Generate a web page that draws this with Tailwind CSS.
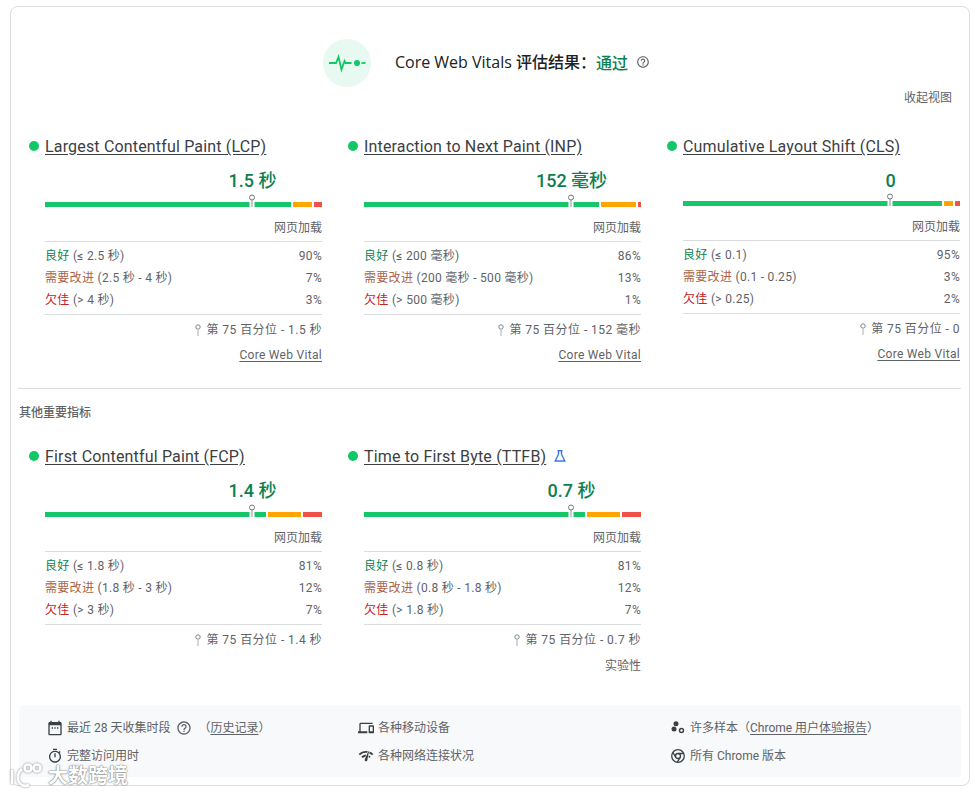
<!doctype html>
<html lang="zh">
<head>
<meta charset="utf-8">
<script src="https://cdn.jsdelivr.net/npm/@tailwindcss/browser@4"></script>
</head>
<body class="bg-white font-['Roboto','Noto_Sans_CJK_SC',sans-serif] text-[#5f6368]">
<div class="relative h-[795px] w-[977px] overflow-hidden pl-2.5 pt-1.5">
  <main class="h-[780px] w-[960px] rounded-lg border border-[#dadce0] px-2 pt-8">
    <header class="flex items-center justify-center gap-6 pr-[7px]">
      <div class="flex size-12 items-center justify-center rounded-full bg-[#e8f9f1]">
        <svg class="h-6 w-[38px]" viewBox="0 0 38 24" fill="none" stroke="#12c765" stroke-width="1.8"><path d="M1 12h7l2.5-6 3 12.5 3-8.5 1 2h6"/><circle cx="29" cy="12" r="3" fill="#12c765" stroke="none"/><path d="M33.5 12h4"/></svg>
      </div>
      <div class="flex items-center pb-0.5 text-base font-medium text-[#202124]">
        <span class="font-['Open_Sans','Noto_Sans_CJK_SC',sans-serif]">Core Web Vitals 评估结果：</span><span class="font-['Noto_Sans_CJK_SC',sans-serif] text-[#0d7f4f]">通过</span>
        <svg class="ml-2 size-3.5" viewBox="0 0 24 24" fill="#5f6368"><path d="M11 18h2v-2h-2v2zm1-16C6.48 2 2 6.48 2 12s4.48 10 10 10 10-4.48 10-10S17.52 2 12 2zm0 18c-4.41 0-8-3.59-8-8s3.59-8 8-8 8 3.59 8 8-3.59 8-8 8zm0-14c-2.21 0-4 1.79-4 4h2c0-1.1.9-2 2-2s2 .9 2 2c0 2-3 1.75-3 5h2c0-2.25 3-2.5 3-5 0-2.21-1.79-4-4-4z"/></svg>
      </div>
    </header>
    <div class="mt-0.5 h-4 pr-[9px] text-right text-xs leading-[18px]">收起视图</div>

    <section class="mt-[29px] grid w-[941px] grid-cols-3 gap-4">
      <!-- LCP -->
      <article class="pl-[26px]">
        <div class="relative h-6 text-base leading-[26px] tracking-[0.17px] text-[#3c4043]"><span class="absolute -left-4 top-[7px] size-2.5 rounded-full bg-[#12c765]"></span><a class="underline underline-offset-2">Largest Contentful Paint (LCP)</a></div>
        <div class="relative mt-2.5 h-6"><span class="absolute left-[207.5px] -translate-x-1/2 whitespace-nowrap text-lg font-medium leading-[26px] text-[#0d7f4f]">1.5 秒</span></div>
        <div class="relative mt-2.5 flex h-[5px] gap-0.5">
          <span class="grow-[90] basis-0 bg-[#15c768]"></span><span class="grow-[7] basis-0 bg-[#ffa400]"></span><span class="grow-[3] basis-0 bg-[#f0524a]"></span>
          <svg class="absolute -top-2 left-[207px] h-[13px] w-[9px] -translate-x-1/2" viewBox="0 0 9 13"><rect x="2" y="7" width="5" height="6" fill="#fff"/><rect x="3.5" y="6" width="2" height="7" fill="#c6cacd"/><circle cx="4.5" cy="3.5" r="2.5" fill="#fff" stroke="#757575"/></svg>
        </div>
        <div class="mt-3 h-4 text-right text-xs leading-[18px]">网页加载</div>
        <div class="mt-1.5 border-y border-[#dadce0] py-[3px] text-xs leading-[22px] tracking-[0.3px]">
          <div class="flex justify-between"><span><span class="text-[#0d7f4f]">良好</span> (≤ 2.5 秒)</span><span>90%</span></div>
          <div class="flex justify-between"><span><span class="text-[#a9654a]">需要改进</span> (2.5 秒 - 4 秒)</span><span>7%</span></div>
          <div class="flex justify-between"><span><span class="text-[#c5221f]">欠佳</span> (&gt; 4 秒)</span><span>3%</span></div>
        </div>
        <div class="mt-[7px] flex h-4 items-center justify-end gap-1 text-xs tracking-[0.45px]"><svg class="h-3 w-2" viewBox="0 0 8 12"><circle cx="4" cy="3" r="2.2" fill="none" stroke="#80868b"/><path d="M4 5.5V12" stroke="#c6cacd" stroke-width="1.5"/></svg><span>第 75 百分位 - 1.5 秒</span></div>
        <div class="mt-[9px] h-4 text-right text-xs leading-4 tracking-[0.3px]"><a class="underline underline-offset-2">Core Web Vital</a></div>
      </article>
      <!-- INP -->
      <article class="pl-[26px]">
        <div class="relative h-6 text-base leading-[26px] tracking-[0.17px] text-[#3c4043]"><span class="absolute -left-4 top-[7px] size-2.5 rounded-full bg-[#12c765]"></span><a class="underline underline-offset-2">Interaction to Next Paint (INP)</a></div>
        <div class="relative mt-2.5 h-6"><span class="absolute left-[207.5px] -translate-x-1/2 whitespace-nowrap text-lg font-medium leading-[26px] text-[#0d7f4f]">152 毫秒</span></div>
        <div class="relative mt-2.5 flex h-[5px] gap-0.5">
          <span class="grow-[86] basis-0 bg-[#15c768]"></span><span class="grow-[13] basis-0 bg-[#ffa400]"></span><span class="grow-[1] basis-0 bg-[#f0524a]"></span>
          <svg class="absolute -top-2 left-[207px] h-[13px] w-[9px] -translate-x-1/2" viewBox="0 0 9 13"><rect x="2" y="7" width="5" height="6" fill="#fff"/><rect x="3.5" y="6" width="2" height="7" fill="#c6cacd"/><circle cx="4.5" cy="3.5" r="2.5" fill="#fff" stroke="#757575"/></svg>
        </div>
        <div class="mt-3 h-4 text-right text-xs leading-[18px]">网页加载</div>
        <div class="mt-1.5 border-y border-[#dadce0] py-[3px] text-xs leading-[22px] tracking-[0.3px]">
          <div class="flex justify-between"><span><span class="text-[#0d7f4f]">良好</span> (≤ 200 毫秒)</span><span>86%</span></div>
          <div class="flex justify-between"><span><span class="text-[#a9654a]">需要改进</span> (200 毫秒 - 500 毫秒)</span><span>13%</span></div>
          <div class="flex justify-between"><span><span class="text-[#c5221f]">欠佳</span> (&gt; 500 毫秒)</span><span>1%</span></div>
        </div>
        <div class="mt-[7px] flex h-4 items-center justify-end gap-1 text-xs tracking-[0.45px]"><svg class="h-3 w-2" viewBox="0 0 8 12"><circle cx="4" cy="3" r="2.2" fill="none" stroke="#80868b"/><path d="M4 5.5V12" stroke="#c6cacd" stroke-width="1.5"/></svg><span>第 75 百分位 - 152 毫秒</span></div>
        <div class="mt-[9px] h-4 text-right text-xs leading-4 tracking-[0.3px]"><a class="underline underline-offset-2">Core Web Vital</a></div>
      </article>
      <!-- CLS -->
      <article class="pl-[26px]">
        <div class="relative h-6 text-base leading-[26px] tracking-[0.17px] text-[#3c4043]"><span class="absolute -left-4 top-[7px] size-2.5 rounded-full bg-[#12c765]"></span><a class="underline underline-offset-2">Cumulative Layout Shift (CLS)</a></div>
        <div class="relative mt-2.5 h-6"><span class="absolute left-[207.5px] -translate-x-1/2 whitespace-nowrap text-lg font-medium leading-[26px] text-[#0d7f4f]">0</span></div>
        <div class="relative mt-[9px] flex h-[5px] gap-0.5">
          <span class="grow-[95] basis-0 bg-[#15c768]"></span><span class="grow-[3] basis-0 bg-[#ffa400]"></span><span class="grow-[2] basis-0 bg-[#f0524a]"></span>
          <svg class="absolute -top-2 left-[207px] h-[13px] w-[9px] -translate-x-1/2" viewBox="0 0 9 13"><rect x="2" y="7" width="5" height="6" fill="#fff"/><rect x="3.5" y="6" width="2" height="7" fill="#c6cacd"/><circle cx="4.5" cy="3.5" r="2.5" fill="#fff" stroke="#757575"/></svg>
        </div>
        <div class="mt-3 h-4 text-right text-xs leading-[18px]">网页加载</div>
        <div class="mt-1.5 border-y border-[#dadce0] py-[3px] text-xs leading-[22px] tracking-[0.3px]">
          <div class="flex justify-between"><span><span class="text-[#0d7f4f]">良好</span> (≤ 0.1)</span><span>95%</span></div>
          <div class="flex justify-between"><span><span class="text-[#a9654a]">需要改进</span> (0.1 - 0.25)</span><span>3%</span></div>
          <div class="flex justify-between"><span><span class="text-[#c5221f]">欠佳</span> (&gt; 0.25)</span><span>2%</span></div>
        </div>
        <div class="mt-[7px] flex h-4 items-center justify-end gap-1 text-xs tracking-[0.45px]"><svg class="h-3 w-2" viewBox="0 0 8 12"><circle cx="4" cy="3" r="2.2" fill="none" stroke="#80868b"/><path d="M4 5.5V12" stroke="#c6cacd" stroke-width="1.5"/></svg><span>第 75 百分位 - 0</span></div>
        <div class="mt-[9px] h-4 text-right text-xs leading-4 tracking-[0.3px]"><a class="underline underline-offset-2">Core Web Vital</a></div>
      </article>
    </section>

    <hr class="-ml-px mt-[25px] border-[#dadce0]">
    <h2 class="mt-4 h-4 text-xs font-medium leading-4">其他重要指标</h2>

    <section class="mt-[23px] grid w-[941px] grid-cols-3 gap-4">
      <!-- FCP -->
      <article class="pl-[26px]">
        <div class="relative h-6 text-base leading-[26px] tracking-[0.17px] text-[#3c4043]"><span class="absolute -left-4 top-[7px] size-2.5 rounded-full bg-[#12c765]"></span><a class="underline underline-offset-2">First Contentful Paint (FCP)</a></div>
        <div class="relative mt-2.5 h-6"><span class="absolute left-[207.5px] -translate-x-1/2 whitespace-nowrap text-lg font-medium leading-[26px] text-[#0d7f4f]">1.4 秒</span></div>
        <div class="relative mt-2.5 flex h-[5px] gap-0.5">
          <span class="grow-[81] basis-0 bg-[#15c768]"></span><span class="grow-[12] basis-0 bg-[#ffa400]"></span><span class="grow-[7] basis-0 bg-[#f0524a]"></span>
          <svg class="absolute -top-2 left-[207px] h-[13px] w-[9px] -translate-x-1/2" viewBox="0 0 9 13"><rect x="2" y="7" width="5" height="6" fill="#fff"/><rect x="3.5" y="6" width="2" height="7" fill="#c6cacd"/><circle cx="4.5" cy="3.5" r="2.5" fill="#fff" stroke="#757575"/></svg>
        </div>
        <div class="mt-3 h-4 text-right text-xs leading-[18px]">网页加载</div>
        <div class="mt-1.5 border-y border-[#dadce0] py-[3px] text-xs leading-[22px] tracking-[0.3px]">
          <div class="flex justify-between"><span><span class="text-[#0d7f4f]">良好</span> (≤ 1.8 秒)</span><span>81%</span></div>
          <div class="flex justify-between"><span><span class="text-[#a9654a]">需要改进</span> (1.8 秒 - 3 秒)</span><span>12%</span></div>
          <div class="flex justify-between"><span><span class="text-[#c5221f]">欠佳</span> (&gt; 3 秒)</span><span>7%</span></div>
        </div>
        <div class="mt-[7px] flex h-4 items-center justify-end gap-1 text-xs tracking-[0.45px]"><svg class="h-3 w-2" viewBox="0 0 8 12"><circle cx="4" cy="3" r="2.2" fill="none" stroke="#80868b"/><path d="M4 5.5V12" stroke="#c6cacd" stroke-width="1.5"/></svg><span>第 75 百分位 - 1.4 秒</span></div>
        <div class="mt-[9px] h-4"></div>
      </article>
      <!-- TTFB -->
      <article class="pl-[26px]">
        <div class="relative flex h-6 items-start gap-2 text-base leading-[26px] tracking-[0.17px] text-[#3c4043]"><span class="absolute -left-4 top-[7px] size-2.5 rounded-full bg-[#12c765]"></span><a class="underline underline-offset-2">Time to First Byte (TTFB)</a>
          <svg class="mt-1.5 size-3" viewBox="0 0 12 12" fill="none" stroke="#3b78e7" stroke-width="1.4"><path d="M3.5 .7h5M4.5 .7v3.5L1.2 11h9.6L7.5 4.200V.7"/></svg></div>
        <div class="relative mt-2.5 h-6"><span class="absolute left-[207.5px] -translate-x-1/2 whitespace-nowrap text-lg font-medium leading-[26px] text-[#0d7f4f]">0.7 秒</span></div>
        <div class="relative mt-2.5 flex h-[5px] gap-0.5">
          <span class="grow-[81] basis-0 bg-[#15c768]"></span><span class="grow-[12] basis-0 bg-[#ffa400]"></span><span class="grow-[7] basis-0 bg-[#f0524a]"></span>
          <svg class="absolute -top-2 left-[207px] h-[13px] w-[9px] -translate-x-1/2" viewBox="0 0 9 13"><rect x="2" y="7" width="5" height="6" fill="#fff"/><rect x="3.5" y="6" width="2" height="7" fill="#c6cacd"/><circle cx="4.5" cy="3.5" r="2.5" fill="#fff" stroke="#757575"/></svg>
        </div>
        <div class="mt-3 h-4 text-right text-xs leading-[18px]">网页加载</div>
        <div class="mt-1.5 border-y border-[#dadce0] py-[3px] text-xs leading-[22px] tracking-[0.3px]">
          <div class="flex justify-between"><span><span class="text-[#0d7f4f]">良好</span> (≤ 0.8 秒)</span><span>81%</span></div>
          <div class="flex justify-between"><span><span class="text-[#a9654a]">需要改进</span> (0.8 秒 - 1.8 秒)</span><span>12%</span></div>
          <div class="flex justify-between"><span><span class="text-[#c5221f]">欠佳</span> (&gt; 1.8 秒)</span><span>7%</span></div>
        </div>
        <div class="mt-[7px] flex h-4 items-center justify-end gap-1 text-xs tracking-[0.45px]"><svg class="h-3 w-2" viewBox="0 0 8 12"><circle cx="4" cy="3" r="2.2" fill="none" stroke="#80868b"/><path d="M4 5.5V12" stroke="#c6cacd" stroke-width="1.5"/></svg><span>第 75 百分位 - 0.7 秒</span></div>
        <div class="mt-[9px] h-4 text-right text-xs leading-[18px]">实验性</div>
      </article>
    </section>

    <footer class="mt-8 grid h-[72px] grid-cols-[311px_312px_1fr] grid-rows-2 rounded-sm bg-[#f8f9fa] pb-[7px] pl-7 pt-[9px] text-xs">
      <div class="flex items-center gap-1">
        <svg class="size-4" viewBox="0 0 24 24" fill="#3c4043"><path d="M20 3h-1V1h-2v2H7V1H5v2H4c-1.1 0-2 .9-2 2v16c0 1.1.9 2 2 2h16c1.100 0 2-.9 2-2V5c0-1.100-.9-2-2-2zm0 18H4V8h16v13z"/><path d="M7 11h2v2H7zm4 0h2v2h-2zm4 0h2v2h-2z"/></svg>
        <span>最近 28 天收集时段</span>
        <svg class="ml-0.5 size-4" viewBox="0 0 24 24" fill="#5f6368"><path d="M11 18h2v-2h-2v2zm1-16C6.48 2 2 6.48 2 12s4.48 10 10 10 10-4.48 10-10S17.52 2 12 2zm0 18c-4.41 0-8-3.59-8-8s3.59-8 8-8 8 3.59 8 8-3.59 8-8 8zm0-14c-2.21 0-4 1.79-4 4h2c0-1.1.9-2 2-2s2 .9 2 2c0 2-3 1.75-3 5h2c0-2.25 3-2.5 3-5 0-2.21-1.79-4-4-4z"/></svg>
        <span class="ml-0.5">（<a class="underline underline-offset-2">历史记录</a>）</span>
      </div>
      <div class="flex items-center gap-1">
        <svg class="size-4" viewBox="0 0 24 24" fill="#3c4043"><path d="M4 6h18V4H4c-1.1 0-2 .9-2 2v11H0v3h14v-3H4V6zm19 2h-6c-.55 0-1 .45-1 1v10c0 .55.45 1 1 1h6c.55 0 1-.45 1-1V9c0-.55-.45-1-1-1zm-1 9h-4v-7h4v7z"/></svg>
        <span>各种移动设备</span>
      </div>
      <div class="flex items-center gap-1">
        <svg class="size-4" viewBox="0 0 16 16" fill="#3c4043"><circle cx="6" cy="3.800" r="2.500"/><circle cx="4" cy="9" r="2.500"/><circle cx="11.500" cy="10.500" r="2" fill="none" stroke="#3c4043" stroke-width="1.400"/></svg>
        <span>许多样本（<a class="underline underline-offset-2">Chrome 用户体验报告</a>）</span>
      </div>
      <div class="flex items-center gap-1">
        <svg class="size-4" viewBox="0 0 24 24" fill="#3c4043"><path d="M15 1H9v2h6V1zm-4 13h2V8h-2v6zm8.030-6.610l1.420-1.420c-.43-.51-.9-.99-1.410-1.410l-1.420 1.420C16.070 4.740 14.120 4 12 4c-4.970 0-9 4.030-9 9s4.020 9 9 9 9-4.030 9-9c0-2.120-.74-4.070-1.970-5.610zM12 20c-3.870 0-7-3.130-7-7s3.130-7 7-7 7 3.130 7 7-3.130 7-7 7z"/></svg>
        <span>完整访问用时</span>
      </div>
      <div class="flex items-center gap-1">
        <svg class="size-4" viewBox="0 0 24 24" fill="#3c4043"><path d="M15.900 5c-.17 0-.32.09-.41.23l-.07.15-5.180 11.650c-.16.29-.26.61-.26.96 0 1.110.9 2.010 2.010 2.010.96 0 1.770-.68 1.960-1.590l.01-.03L16.400 5.500c0-.28-.22-.5-.5-.5zM1 9l2 2c2.880-2.880 6.790-4.080 10.530-3.620l1.190-2.680C9.890 3.840 4.740 5.270 1 9zm20 2l2-2c-1.640-1.640-3.550-2.820-5.590-3.570l-.53 2.820c1.500.62 2.900 1.530 4.120 2.750zm-4 4l2-2c-.8-.8-1.700-1.420-2.660-1.890l-.55 2.920c.42.27.83.59 1.210.97zM5 13l2 2c1.130-1.130 2.560-1.790 4.030-2l1.280-2.880c-2.630-.08-5.300.87-7.310 2.880z"/></svg>
        <span>各种网络连接状况</span>
      </div>
      <div class="flex items-center gap-1">
        <svg class="size-4" viewBox="0 0 16 16" fill="none" stroke="#3c4043" stroke-width="1.300"><circle cx="8" cy="8" r="6.300"/><circle cx="8" cy="8" r="2.500"/><path d="M8 5.500h5.800M5.800 9.300 2.900 4.300M10.200 9.300 7.300 14.200"/></svg>
        <span>所有 Chrome 版本</span>
      </div>
    </footer>
  </main>

  <div class="absolute left-2 top-[763px] flex items-center gap-1 text-white">
    <svg class="h-[26px] w-[36px] [filter:drop-shadow(0_0_1px_#80868b)]" viewBox="0 0 36 26" fill="none" stroke="#fff" stroke-width="2.600"><path d="M4 7v14M14 6C8 11 9 19 14 22c2 1 5 1 7 0"/><circle cx="20" cy="5" r="3.500"/><circle cx="29" cy="5" r="3.500"/></svg>
    <span class="text-xl font-bold leading-none [text-shadow:0_0_1px_#5f6368,0_0_2px_#80868b]">大数跨境</span>
  </div>
</div>
</body>
</html>
